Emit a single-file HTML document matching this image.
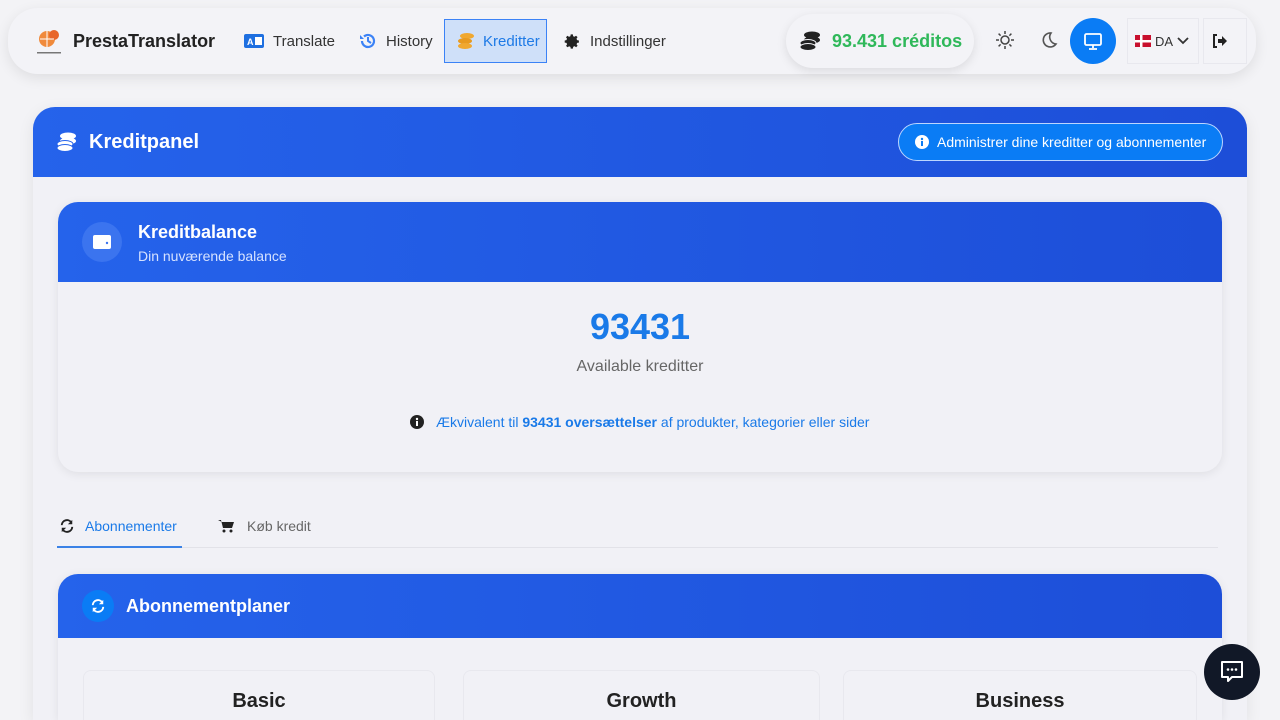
<!DOCTYPE html>
<html style="overflow:hidden;height:720px"><head><meta charset="utf-8"><style>
*{box-sizing:border-box;margin:0;padding:0}
body{width:1280px;height:720px;overflow:hidden;background:#f3f3f6;font-family:"Liberation Sans",sans-serif;color:#222;position:relative}
.nav{position:absolute;left:8px;top:8px;width:1248px;height:66px;background:#f3f3f7;border-radius:30px;box-shadow:0 4px 14px rgba(0,0,0,.09)}
.abs{position:absolute}
svg{flex-shrink:0}
.item{position:absolute;top:12px;height:42px;display:flex;align-items:center;gap:9px;font-size:15px;color:#333;padding:0 13px;white-space:nowrap}
.blue{background:linear-gradient(90deg,#2563eb,#1d4ed8)}
.card{position:absolute;left:33px;top:107px;width:1214px;height:613px;background:#f1f1f6;border-radius:22px 22px 0 0;overflow:hidden;box-shadow:0 4px 16px rgba(0,0,0,.08)}
.inner{position:absolute;background:#f1f1f6;border-radius:20px;overflow:hidden;box-shadow:0 2px 10px rgba(0,0,0,.08)}
</style></head><body>
<div class="nav">
 <svg class="abs" style="left:27px;top:20px" width="28" height="28" viewBox="0 0 28 28"><circle cx="12" cy="11" r="8" fill="#f08a3c"/><circle cx="19" cy="7" r="5" fill="#e8652a"/><path d="M5 11h14M12 3v16" stroke="#fff" stroke-width="1"/><rect x="2" y="24" width="24" height="1.5" fill="#777"/></svg>
 <div class="abs" style="left:65px;top:23px;font-size:18px;font-weight:bold;color:#222">PrestaTranslator</div>
 <div class="item" style="left:223px"><svg width="20" height="14"><rect width="20" height="14" rx="2" fill="#1e6fe0"/><text x="3" y="11" font-size="9" fill="#fff" font-weight="bold" font-family="Liberation Sans">A</text><rect x="11" y="3" width="7" height="8" fill="#fff"/></svg>Translate</div>
 <div class="item" style="left:338px"><svg width="18" height="18" viewBox="0 0 18 18"><path d="M3 9a6 6 0 1 0 2-4.5" fill="none" stroke="#3b82f6" stroke-width="2.2"/><path d="M1 3v4h4z" fill="#3b82f6"/><path d="M9 5v4l3 2" stroke="#3b82f6" stroke-width="2" fill="none"/></svg>History</div>
 <div class="item" style="left:436px;top:11px;height:44px;width:103px;background:#cfe0f9;border:1px solid #3b82f6;color:#1e7ae6;gap:8px;padding:0 12px">
  <svg width="18" height="18"><ellipse cx="10" cy="4" rx="7" ry="3" fill="#f0a830"/><ellipse cx="8" cy="9" rx="7" ry="3" fill="#e89a20"/><ellipse cx="8" cy="14" rx="7" ry="3" fill="#f0a830"/></svg>Kreditter</div>
 <div class="item" style="left:543px"><svg width="17" height="17" viewBox="0 0 24 24"><path fill="#222" d="M12 8a4 4 0 1 0 0 8 4 4 0 0 0 0-8zm9 5.5v-3l-2.6-.5a7 7 0 0 0-.8-1.9l1.5-2.2-2.1-2.1-2.2 1.5a7 7 0 0 0-1.9-.8L12.5 2h-3l-.5 2.6a7 7 0 0 0-1.9.8L4.9 3.9 2.8 6l1.5 2.2a7 7 0 0 0-.8 1.9L1 10.5v3l2.6.5c.2.7.4 1.3.8 1.9l-1.5 2.2 2.1 2.1 2.2-1.5c.6.4 1.2.6 1.9.8l.4 2.5h3l.5-2.6c.7-.2 1.300-.4 1.9-.8l2.2 1.5 2.1-2.1-1.5-2.2c.4-.6.6-1.2.8-1.9z"/></svg>Indstillinger</div>
 <div class="abs" style="left:778px;top:6px;width:188px;height:54px;background:#f3f3f7;border-radius:27px;box-shadow:0 3px 10px rgba(0,0,0,.1);display:flex;align-items:center;padding-left:13px;gap:11px">
  <svg width="22" height="20"><ellipse cx="13" cy="4" rx="8" ry="3.5" fill="#222"/><ellipse cx="13" cy="9" rx="8" ry="3.5" fill="#222"/><ellipse cx="9" cy="12" rx="8" ry="3.5" fill="#222" stroke="#f3f3f7"/><ellipse cx="9" cy="16" rx="8" ry="3.5" fill="#222" stroke="#f3f3f7"/></svg>
  <span style="color:#2fb85a;font-size:18px;font-weight:bold;white-space:nowrap">93.431 créditos</span></div>
 <svg class="abs" style="left:987px;top:22px" width="20" height="20" viewBox="0 0 20 20" stroke="#444" stroke-width="1.5" fill="none"><circle cx="10" cy="10" r="4"/><path d="M10 1v3M10 16v3M1 10h3M16 10h3M3.6 3.6l2 2M14.4 14.4l2 2M3.6 16.4l2-2M14.4 5.6l2-2"/></svg>
 <svg class="abs" style="left:1032px;top:23px" width="18" height="18" viewBox="0 0 18 18"><path d="M11 2a7 7 0 1 0 5 11A7 7 0 0 1 11 2z" fill="none" stroke="#555" stroke-width="1.6"/></svg>
 <div class="abs" style="left:1062px;top:10px;width:46px;height:46px;border-radius:50%;background:#0a7cf5"></div>
 <svg class="abs" style="left:1075px;top:23px" width="20" height="20" viewBox="0 0 20 20" fill="none" stroke="#fff" stroke-width="1.8"><rect x="2" y="3" width="16" height="11" rx="1.5"/><path d="M10 14v3M6 18h8"/></svg>
 <div class="abs" style="left:1119px;top:10px;width:72px;height:46px;border:1px solid #e8e8ee;display:flex;align-items:center;padding-left:7px;gap:4px;font-size:13px;color:#333"><svg width="16" height="12"><rect width="16" height="12" fill="#c8102e"/><rect x="5" width="2.5" height="12" fill="#fff"/><rect y="5" width="16" height="2.5" fill="#fff"/></svg>DA<svg width="12" height="8"><path d="M1 1l5 5 5-5" fill="none" stroke="#333" stroke-width="1.8"/></svg></div>
 <div class="abs" style="left:1195px;top:10px;width:44px;height:46px;border:1px solid #e8e8ee"></div>
 <svg class="abs" style="left:1204px;top:26px" width="15" height="14" viewBox="0 0 15 14"><path d="M5 1H2v12h3" fill="none" stroke="#222" stroke-width="2"/><path d="M6 5h4V2l5 5-5 5V9H6z" fill="#222"/></svg>
</div>

<div class="card">
 <div class="blue abs" style="left:0;top:0;width:1214px;height:70px"></div>
 <svg class="abs" style="left:23px;top:25px" width="21" height="20"><ellipse cx="12" cy="4" rx="8" ry="3.5" fill="#fff"/><ellipse cx="12" cy="9" rx="8" ry="3.5" fill="#fff"/><ellipse cx="9" cy="12" rx="8" ry="3.5" fill="#fff" stroke="#2563eb"/><ellipse cx="9" cy="16" rx="8" ry="3.5" fill="#fff" stroke="#2563eb"/></svg>
 <div class="abs" style="left:56px;top:24px;color:#fff;font-size:20px;font-weight:bold">Kreditpanel</div>
 <div class="abs" style="left:865px;top:16px;width:325px;height:38px;border-radius:19px;background:#0a7cf5;border:1px solid #bcd6ff;color:#fff;font-size:14px;display:flex;align-items:center;padding-left:16px;gap:8px"><svg width="14" height="14"><circle cx="7" cy="7" r="7" fill="#fff"/><rect x="6" y="6" width="2" height="5" fill="#0a7cf5"/><circle cx="7" cy="4" r="1.2" fill="#0a7cf5"/></svg>Administrer dine kreditter og abonnementer</div>

 <div class="inner" style="left:25px;top:95px;width:1164px;height:270px">
  <div class="blue abs" style="left:0;top:0;width:1164px;height:80px"></div>
  <div class="abs" style="left:24px;top:20px;width:40px;height:40px;border-radius:50%;background:#3b74ef"></div>
  <svg class="abs" style="left:35px;top:33px" width="18" height="14"><rect width="18" height="14" rx="2" fill="#fff"/><circle cx="14" cy="8" r="1.2" fill="#3b74ef"/></svg>
  <div class="abs" style="left:80px;top:20px;color:#fff;font-size:18px;font-weight:bold">Kreditbalance</div>
  <div class="abs" style="left:80px;top:46px;color:#d6e2ff;font-size:14px">Din nuværende balance</div>
  <div class="abs" style="left:0;width:1164px;top:104px;text-align:center;color:#1a7ae8;font-size:36px;font-weight:bold">93431</div>
  <div class="abs" style="left:0;width:1164px;top:156px;text-align:center;color:#666;font-size:16px">Available kreditter</div>
  <div class="abs" style="left:352px;top:212px;font-size:14px;color:#1a7ae8;display:flex;gap:12px;align-items:center"><svg width="14" height="14"><circle cx="7" cy="7" r="7" fill="#222"/><rect x="6" y="6" width="2" height="5" fill="#fff"/><circle cx="7" cy="4" r="1.2" fill="#fff"/></svg><span>Ækvivalent til <b>93431 oversættelser</b> af produkter, kategorier eller sider</span></div>
 </div>

 <div class="abs" style="left:27px;top:411px;font-size:14px;color:#1a7ae8;display:flex;gap:11px;align-items:center"><svg width="14" height="14" viewBox="0 0 16 16"><path d="M2 7a6 6 0 0 1 11-3M14 9a6 6 0 0 1-11 3" fill="none" stroke="#222" stroke-width="2.2"/><path d="M14 1v5H9zM2 15v-5h5z" fill="#222"/></svg>Abonnementer</div>
 <div class="abs" style="left:24px;top:439px;width:125px;height:2px;background:#3b82e6"></div>
 <div class="abs" style="left:149px;top:440px;width:1036px;height:1px;background:#e2e2e8"></div>
 <div class="abs" style="left:185px;top:411px;font-size:14px;color:#666;display:flex;gap:13px;align-items:center"><svg width="16" height="14" viewBox="0 0 16 14"><path d="M0 1h3l2 8h9l2-6H4" fill="#222"/><circle cx="6" cy="12" r="1.5" fill="#222"/><circle cx="13" cy="12" r="1.5" fill="#222"/></svg>Køb kredit</div>

 <div class="inner" style="left:25px;top:467px;width:1164px;height:146px;border-radius:20px 20px 0 0">
  <div class="blue abs" style="left:0;top:0;width:1164px;height:64px"></div>
  <div class="abs" style="left:24px;top:16px;width:32px;height:32px;border-radius:50%;background:#0a7cf5"></div>
  <svg class="abs" style="left:33px;top:25px" width="14" height="14" viewBox="0 0 16 16"><path d="M2 7a6 6 0 0 1 11-3M14 9a6 6 0 0 1-11 3" fill="none" stroke="#fff" stroke-width="2.2"/><path d="M14 1v5H9zM2 15v-5h5z" fill="#fff"/></svg>
  <div class="abs" style="left:68px;top:22px;color:#fff;font-size:18px;font-weight:bold">Abonnementplaner</div>
  <div class="abs" style="left:25px;top:96px;width:352px;height:60px;border:1px solid #e8e8ee;border-bottom:0;border-radius:8px 8px 0 0;text-align:center;padding-top:19px;font-size:20px;font-weight:bold">Basic</div>
  <div class="abs" style="left:405px;top:96px;width:357px;height:60px;border:1px solid #e8e8ee;border-bottom:0;border-radius:8px 8px 0 0;text-align:center;padding-top:19px;font-size:20px;font-weight:bold">Growth</div>
  <div class="abs" style="left:785px;top:96px;width:354px;height:60px;border:1px solid #e8e8ee;border-bottom:0;border-radius:8px 8px 0 0;text-align:center;padding-top:19px;font-size:20px;font-weight:bold">Business</div>
 </div>
</div>
<div class="abs" style="left:1204px;top:644px;width:56px;height:56px;border-radius:50%;background:#111827"></div>
<svg class="abs" style="left:1219px;top:660px" width="26" height="24" viewBox="0 0 26 24"><path d="M3 2h20v15H13l-4 4v-4H3z" fill="none" stroke="#fff" stroke-width="2" stroke-linejoin="round"/><circle cx="9" cy="9.5" r="1.3" fill="#fff"/><circle cx="13" cy="9.5" r="1.3" fill="#fff"/><circle cx="17" cy="9.5" r="1.3" fill="#fff"/></svg>
</body></html>
